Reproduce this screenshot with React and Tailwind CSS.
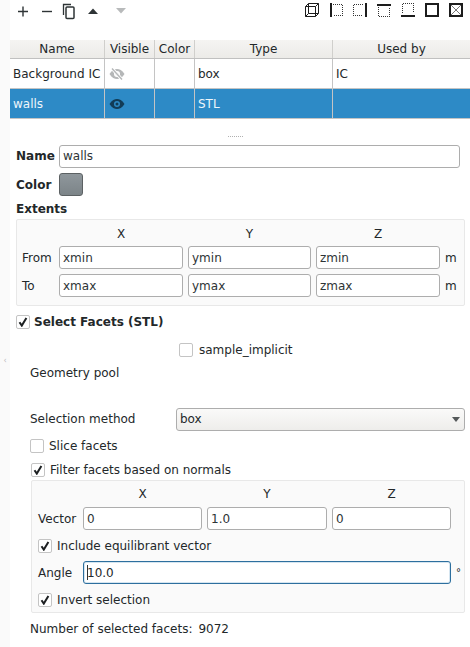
const inputCls = 'h-[23px] min-w-0 rounded-[3px] border border-[#adadad] bg-white px-[3px] text-[12px] text-[#2e3436] outline-none';

function Check({ checked, className = '' }) {
  return (
    <span className={`flex h-[14px] w-[14px] shrink-0 items-center justify-center rounded-[2px] border border-[#c4c4c4] bg-white ${className}`}>
      {checked && (
        <svg width="10" height="10" viewBox="0 0 10 10">
          <path d="M1.5 5.2 L3.8 8.6 L8.4 1" fill="none" stroke="#1d2022" strokeWidth="2" />
        </svg>
      )}
    </span>
  );
}

function Field({ value, className = '' }) {
  return <input readOnly value={value} className={`${inputCls} ${className}`} />;
}

function BoxIcon({ children }) {
  return (
    <svg width="16" height="16" viewBox="0 0 16 16" fill="none" stroke="#1c1c1c" shapeRendering="crispEdges">
      {children}
    </svg>
  );
}

const dotted = { strokeDasharray: '1 1', stroke: '#333' };

function ViewIcons() {
  return (
    <div className="flex items-center gap-[8px]">
      <BoxIcon>
        <path d="M1.5 4.5 H11.5 V14.5 H1.5 Z M4.5 1.5 H14.5 V11.5 H4.5 Z M1.5 4.5 L4.5 1.5 M11.5 4.5 L14.5 1.5 M11.5 14.5 L14.5 11.5 M1.5 14.5 L4.5 11.5" strokeWidth="1" shapeRendering="auto" />
      </BoxIcon>
      <BoxIcon>
        <path d="M5 2.5 H14.5 V13.5 H5" {...dotted} />
        <path d="M2.5 1 V15" strokeWidth="2" />
      </BoxIcon>
      <BoxIcon>
        <path d="M11 2.5 H1.5 V13.5 H11" {...dotted} />
        <path d="M13.5 1 V15" strokeWidth="2" />
      </BoxIcon>
      <BoxIcon>
        <path d="M2.5 5 V14.5 H13.5 V5" {...dotted} />
        <path d="M1 2.5 H15" strokeWidth="2" />
      </BoxIcon>
      <BoxIcon>
        <path d="M2.5 11 V1.5 H13.5 V11" {...dotted} />
        <path d="M1 13.5 H15" strokeWidth="2" />
      </BoxIcon>
      <BoxIcon>
        <rect x="2" y="2" width="12" height="12" strokeWidth="2" />
      </BoxIcon>
      <BoxIcon>
        <rect x="2" y="2" width="12" height="12" strokeWidth="2" />
        <path d="M3 3 L13 13 M13 3 L3 13" stroke="#777" shapeRendering="auto" />
      </BoxIcon>
    </div>
  );
}

function Toolbar() {
  return (
    <div className="flex h-[40px] items-start justify-between pr-[6px] pt-[2px]">
      <div className="flex items-center pl-[5px]">
        <svg width="16" height="18" viewBox="0 0 16 18" stroke="#2e3436" strokeWidth="1.4">
          <path d="M3 9.5 H13 M8 4.5 V14.5" />
        </svg>
        <svg width="16" height="18" viewBox="0 0 16 18" stroke="#2e3436" strokeWidth="1.4" className="ml-[8px]">
          <path d="M3 9.5 H13" />
        </svg>
        <svg width="16" height="18" viewBox="0 0 16 18" fill="none" stroke="#2e3436" strokeWidth="1.3" className="ml-[6px]">
          <path d="M2.5 13 V2.5 H10" />
          <rect x="5" y="5" width="8" height="11.5" rx="1" strokeWidth="1.5" />
        </svg>
        <svg width="10" height="6" viewBox="0 0 10 6" fill="#2e3436" className="ml-[11px]">
          <path d="M0 6 L5 0.5 L10 6 Z" />
        </svg>
        <svg width="10" height="6" viewBox="0 0 10 6" fill="#b8babb" className="ml-[18px]">
          <path d="M0 0 L5 5.5 L10 0 Z" />
        </svg>
      </div>
      <ViewIcons />
    </div>
  );
}

function EyeIcon({ color, off }) {
  return (
    <svg width="16" height="12" viewBox="0 0 16 12">
      <path
        fillRule="evenodd"
        fill={color}
        d="M0.5 6 C3 2 5.5 1 8 1 C10.5 1 13 2 15.5 6 C13 10 10.5 11 8 11 C5.5 11 3 10 0.5 6 Z M8 3 A3 3 0 1 0 8 9 A3 3 0 1 0 8 3 Z"
      />
      <circle cx="8" cy="6" r="1.5" fill={color} />
      {off && <path d="M3 0.5 L13 11.5" stroke="#ffffff" strokeWidth="3.2" />}
      {off && <path d="M3 0.5 L13 11.5" stroke={color} strokeWidth="1.4" />}
    </svg>
  );
}

const colTemplate = 'grid grid-cols-[95px_50px_40px_138px_137px]';

function GeometryTable() {
  return (
    <div className="text-[12px]">
      <div className={`${colTemplate} h-[19px] border-b border-[#c0c0c0] bg-gradient-to-b from-[#f5f4f2] to-[#ecebe8] text-center leading-[18px] text-[#23282a]`}>
        {['Name', 'Visible', 'Color', 'Type', 'Used by'].map((h) => (
          <div key={h} className="border-r border-[#d0cfcc] last:border-r-0">{h}</div>
        ))}
      </div>
      <div className={`${colTemplate} h-[30px] border-b border-[#c4c4c4] bg-white leading-[30px] text-[#23282a]`}>
        <div className="overflow-hidden whitespace-nowrap border-r border-[#c4c4c4] pl-[3px]">Background IC</div>
        <div className="flex items-center border-r border-[#c4c4c4] pl-[4px]"><EyeIcon color="#b5b7b8" off /></div>
        <div className="border-r border-[#c4c4c4]" />
        <div className="border-r border-[#c4c4c4] pl-[3px]">box</div>
        <div className="pl-[3px]">IC</div>
      </div>
      <div className={`${colTemplate} h-[30px] border-b border-[#c4c4c4] bg-[#2d8ac6] leading-[30px] text-[#eef6fb]`}>
        <div className="border-r border-[#c4c4c4] pl-[3px]">walls</div>
        <div className="flex items-center border-r border-[#c4c4c4] pl-[4px]"><EyeIcon color="#123c57" /></div>
        <div className="border-r border-[#c4c4c4]" />
        <div className="border-r border-[#c4c4c4] pl-[3px]">STL</div>
        <div />
      </div>
    </div>
  );
}

function Extents() {
  return (
    <div className="ml-[6px] mr-[5px] mt-[1px] h-[87px] rounded-[2px] border border-[#e8e8e8] bg-[#fafafa] pl-[5px] pt-[5px] text-[12px] text-[#23282a]">
      <div className="grid grid-cols-[32px_124px_123px_124px_20px] grid-rows-[21px_23px_5px_23px] gap-x-[5px]">
        <div />
        <div className="text-center leading-[18px]">X</div>
        <div className="text-center leading-[18px]">Y</div>
        <div className="text-center leading-[18px]">Z</div>
        <div />
        <div className="leading-[24px]">From</div>
        <Field value="xmin" />
        <Field value="ymin" />
        <Field value="zmin" />
        <div className="leading-[24px]">m</div>
        <div className="col-span-5" />
        <div className="leading-[24px]">To</div>
        <Field value="xmax" />
        <Field value="ymax" />
        <Field value="zmax" />
        <div className="leading-[24px]">m</div>
      </div>
    </div>
  );
}

function NormalsFilter() {
  return (
    <div className="ml-[21px] mr-[5px] mt-[1px] h-[133px] rounded-[2px] border border-[#e8e8e8] bg-[#fafafa] pl-[6px] pt-[4px]">
      <div className="grid grid-cols-[40px_119px_120px_119px] gap-x-[5px] leading-[18px]">
        <div />
        <div className="text-center">X</div>
        <div className="text-center">Y</div>
        <div className="text-center">Z</div>
      </div>
      <div className="mt-[4px] grid grid-cols-[40px_119px_120px_119px] items-center gap-x-[5px]">
        <div>Vector</div>
        <Field value="0" />
        <Field value="1.0" />
        <Field value="0" />
      </div>
      <div className="mt-[4px] flex h-[23px] items-center gap-[5px]">
        <Check checked />
        <span>Include equilibrant vector</span>
      </div>
      <div className="mt-[4px] flex items-center">
        <div className="w-[45px]">Angle</div>
        <div className="flex h-[23px] w-[368px] items-center rounded-[3px] border border-[#2d6f9e] bg-white px-[3px] shadow-[inset_0_0_0_1px_#d5e5f0]">
          <span className="h-[15px] w-px bg-[#2e3436]" />
          <span className="-ml-px">10.0</span>
        </div>
        <div className="ml-[5px] text-[10px]">°</div>
      </div>
      <div className="mt-[4px] flex h-[23px] items-center gap-[5px]">
        <Check checked />
        <span>Invert selection</span>
      </div>
    </div>
  );
}

function SelectFacets() {
  return (
    <div className="text-[12px] text-[#23282a]">
      <div className="mt-[7px] flex h-[18px] items-center gap-[4px] pl-[6px]">
        <Check checked />
        <span className="font-bold">Select Facets (STL)</span>
      </div>
      <div className="mt-[11px] flex h-[16px] items-center gap-[6px] pl-[169px]">
        <Check />
        <span>sample_implicit</span>
      </div>
      <div className="mt-[6px] h-[18px] pl-[20px] leading-[18px]">Geometry pool</div>
      <div className="mt-[25px] flex h-[24px] items-center pl-[20px]">
        <div className="w-[146px]">Selection method</div>
        <div className="flex h-[23px] w-[289px] items-center justify-between rounded-[3px] border border-[#adadad] bg-gradient-to-b from-[#fafaf9] to-[#eeedeb] pl-[3px] pr-[4px]">
          <span>box</span>
          <svg width="8" height="5" viewBox="0 0 8 5" fill="#55595a"><path d="M0 0 L4 5 L8 0 Z" /></svg>
        </div>
      </div>
      <div className="mt-[6px] flex h-[18px] items-center gap-[5px] pl-[20px]">
        <Check />
        <span>Slice facets</span>
      </div>
      <div className="mt-[6px] flex h-[18px] items-center gap-[5px] pl-[21px]">
        <Check checked />
        <span>Filter facets based on normals</span>
      </div>
      <NormalsFilter />
      <div className="mt-[7px] flex h-[18px] items-center pl-[20px] leading-[18px]">
        <span>Number of selected facets:</span>
        <span className="ml-[6px]">9072</span>
      </div>
    </div>
  );
}

export default function App() {
  return (
    <div className="flex h-[647px] w-[470px] overflow-hidden bg-white font-['DejaVu_Sans',sans-serif] text-[12px]">
      <div className="flex w-[10px] shrink-0 items-start justify-center bg-[#fafafa] pt-[356px] text-[8px] leading-[10px] text-[#bbbbbb]">‹</div>
      <div className="flex w-[460px] flex-col">
        <Toolbar />
        <GeometryTable />
        <div className="mt-[17px] flex h-[8px] justify-center pr-[10px]">
          <span className="h-px w-[15px] border-t border-dotted border-[#b0b0b0]" />
        </div>
        <div className="flex h-[24px] items-center pl-[6px]">
          <span className="w-[43px] font-bold text-[#23282a]">Name</span>
          <Field value="walls" className="w-[401px]" />
        </div>
        <div className="mt-[5px] flex h-[23px] items-center pl-[6px]">
          <span className="w-[43px] font-bold text-[#23282a]">Color</span>
          <span className="h-[23px] w-[24px] rounded-[3px] border border-[#5c6163] bg-gradient-to-b from-[#8f979c] to-[#7c8488]" />
        </div>
        <div className="mt-[4px] h-[18px] pl-[6px] font-bold leading-[18px] text-[#23282a]">Extents</div>
        <Extents />
        <SelectFacets />
      </div>
    </div>
  );
}
